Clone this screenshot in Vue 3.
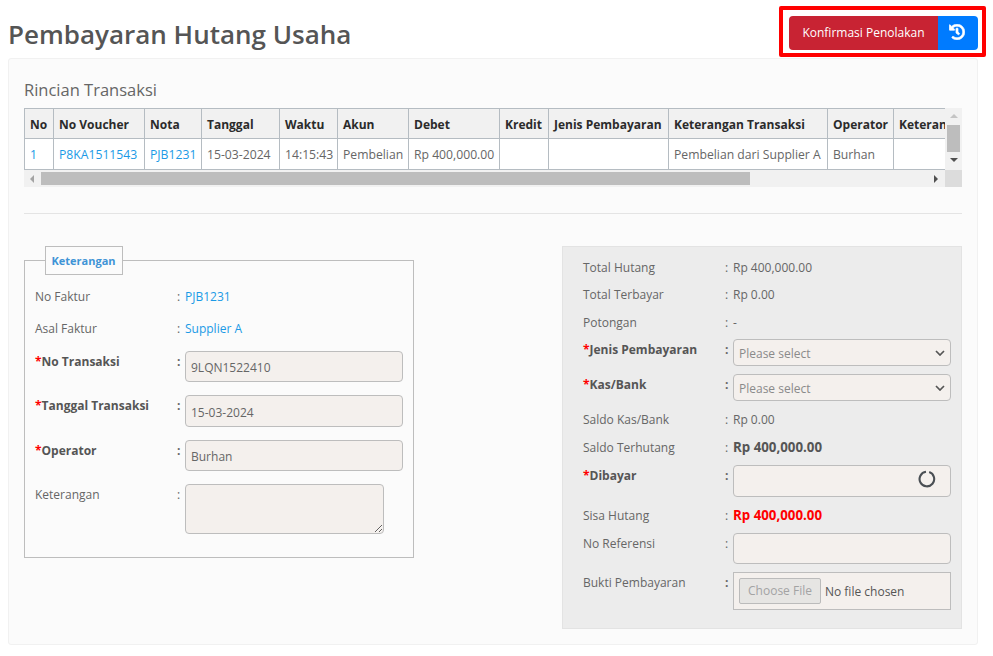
<script setup>
const columns = [
  { title: 'No', width: 29 },
  { title: 'No Voucher', width: 91 },
  { title: 'Nota', width: 57 },
  { title: 'Tanggal', width: 78 },
  { title: 'Waktu', width: 58 },
  { title: 'Akun', width: 71 },
  { title: 'Debet', width: 91 },
  { title: 'Kredit', width: 49 },
  { title: 'Jenis Pembayaran', width: 120 },
  { title: 'Keterangan Transaksi', width: 159 },
  { title: 'Operator', width: 66 },
  { title: 'Keterangan', width: 90 }
]
const tableWidth = columns.reduce((sum, c) => sum + c.width, 0)
</script>

<template>
  <div class="page">
    <header class="head">
      <h1 class="title">Pembayaran Hutang Usaha</h1>
      <div class="mark">
        <div class="btns">
          <button class="btn red">Konfirmasi Penolakan</button>
          <button class="btn blue" aria-label="Riwayat">
            <svg class="history" width="16" height="16" viewBox="0 0 512 512"><path fill="#fff" stroke="#fff" stroke-width="22" d="M504 255.5c.3 136.7-111.2 248.4-247.9 248.5-59 0-113.2-20.5-155.8-54.9-11.1-8.9-11.9-25.5-1.8-35.6l11.3-11.3c8.6-8.6 22.4-9.6 31.9-2C173.1 425.1 212.8 440 256 440c101.7 0 184-82.3 184-184 0-101.7-82.3-184-184-184-48.8 0-93.1 19-126.1 49.9l50.8 50.8c10.1 10.1 2.9 27.3-11.3 27.3H24c-8.8 0-16-7.2-16-16V38.6c0-14.3 17.2-21.4 27.3-11.3l49.4 49.4C129.2 34.1 189.6 8 256 8c136.8 0 247.7 110.8 248 247.5zm-180.9 78.8l9.8-12.6c8.1-10.5 6.3-25.5-4.2-33.7L288 256.3V152c0-13.3-10.7-24-24-24h-16c-13.3 0-24 10.7-24 24v135.7l65.4 50.9c10.5 8.1 25.5 6.3 33.7-4.3z"/></svg>
          </button>
        </div>
      </div>
    </header>

    <main class="card">
      <h2 class="sub">Rincian Transaksi</h2>

      <div class="scroller">
        <div class="viewport">
          <table class="grid" :style="{ width: tableWidth + 'px' }">
            <colgroup>
              <col v-for="c in columns" :key="c.title" :style="{ width: c.width + 'px' }" />
            </colgroup>
            <thead>
              <tr><th v-for="c in columns" :key="c.title">{{ c.title }}</th></tr>
            </thead>
            <tbody>
              <tr>
                <td><a class="link">1</a></td>
                <td><a class="link">P8KA1511543</a></td>
                <td><a class="link">PJB1231</a></td>
                <td>15-03-2024</td>
                <td>14:15:43</td>
                <td>Pembelian</td>
                <td>Rp 400,000.00</td>
                <td></td>
                <td></td>
                <td>Pembelian dari Supplier A</td>
                <td>Burhan</td>
                <td></td>
              </tr>
            </tbody>
          </table>
        </div>
        <div class="vbar">
          <span class="arrow up"></span>
          <span class="vthumb"></span>
          <span class="arrow down"></span>
        </div>
        <div class="hbar">
          <span class="arrow left"></span>
          <span class="hthumb"></span>
          <span class="arrow right"></span>
        </div>
        <div class="corner"></div>
      </div>

      <hr class="rule" />

      <div class="cols">
        <fieldset class="box">
          <legend class="legend">Keterangan</legend>
          <div class="row first"><span>No Faktur</span><span class="colon">:</span><a class="link">PJB1231</a></div>
          <div class="row"><span>Asal Faktur</span><span class="colon">:</span><a class="link">Supplier A</a></div>
          <div class="row ctl"><b class="req">No Transaksi</b><b class="colon">:</b><input class="field" value="9LQN1522410" /></div>
          <div class="row ctl tall"><b class="req">Tanggal Transaksi</b><b class="colon">:</b><input class="field" value="15-03-2024" /></div>
          <div class="row ctl"><b class="req">Operator</b><b class="colon">:</b><input class="field" value="Burhan" /></div>
          <div class="row ctl"><span>Keterangan</span><span class="colon">:</span><textarea class="field area"></textarea></div>
        </fieldset>

        <section class="panel">
          <div class="row"><span>Total Hutang</span><span class="colon">:</span><span>Rp 400,000.00</span></div>
          <div class="row"><span>Total Terbayar</span><span class="colon">:</span><span>Rp 0.00</span></div>
          <div class="row wide"><span>Potongan</span><span class="colon">:</span><span>-</span></div>
          <div class="row ctl narrower"><b class="req">Jenis Pembayaran</b><b class="colon">:</b>
            <select class="field sel"><option>Please select</option></select></div>
          <div class="row ctl narrow"><b class="req">Kas/Bank</b><b class="colon">:</b>
            <select class="field sel"><option>Please select</option></select></div>
          <div class="row wide"><span>Saldo Kas/Bank</span><span class="colon">:</span><span>Rp 0.00</span></div>
          <div class="row wide"><span>Saldo Terhutang</span><span class="colon">:</span><b class="amount">Rp 400,000.00</b></div>
          <div class="row ctl narrow"><b class="req">Dibayar</b><b class="colon">:</b>
            <div class="wrap">
              <input class="field tall-field" />
              <svg class="spin" width="18" height="18" viewBox="0 0 18 18"><path d="M11.2 2.1A7.3 7.3 0 1 1 8 1.77" fill="none" stroke="#4a4f54" stroke-width="2.1"/></svg>
            </div>
          </div>
          <div class="row wide"><span>Sisa Hutang</span><span class="colon">:</span><b class="amount alert">Rp 400,000.00</b></div>
          <div class="row ctl narrow"><span>No Referensi</span><span class="colon">:</span><input class="field" /></div>
          <div class="row ctl narrow"><span>Bukti Pembayaran</span><b class="colon">:</b>
            <div class="file"><span class="choose">Choose File</span><span class="none">No file chosen</span></div>
          </div>
        </section>
      </div>
    </main>
  </div>
</template>

<style>
body { margin: 0; background: #fff; }
</style>

<style scoped>
.page {
  width: 993px;
  height: 656px;
  box-sizing: border-box;
  overflow: hidden;
  padding: 6px 7px 0 8px;
  font-family: "Open Sans", "Noto Sans", sans-serif;
  font-size: 12px;
  line-height: 18px;
  color: #666;
}
.head {
  display: flex;
  justify-content: space-between;
  align-items: flex-start;
  height: 52px;
}
.title {
  margin: 11px 0 0;
  font-size: 26px;
  line-height: 34px;
  font-weight: 600;
  color: #555;
}
.mark {
  border: 4px solid #f00;
  border-radius: 2px;
  padding: 6px 4px 3px 6px;
}
.btns { display: flex; height: 34px; }
.btn {
  border: 0;
  height: 34px;
  padding: 0;
  color: #fff;
  font: inherit;
  display: flex;
  align-items: center;
  justify-content: center;
}
.red { width: 149px; background: #c82333; border-radius: 4px 0 0 4px; }
.blue { width: 40px; background: #007bff; border-radius: 0 4px 4px 0; }
.history { margin: 0 2px 3px 0; }

.card {
  width: 970px;
  height: 587px;
  box-sizing: border-box;
  background: #fbfbfb;
  border: 1px solid #f1f1f1;
  border-radius: 3px;
  padding: 19px 15px 0;
}
.sub {
  margin: 0 0 6px;
  font-size: 16.5px;
  line-height: 24px;
  font-weight: 400;
  color: #666;
}
.scroller {
  display: grid;
  grid-template-columns: 921px 17px;
  grid-template-rows: 62px 17px;
  width: 938px;
}
.viewport { overflow: hidden; background: #fff; }
.grid {
  table-layout: fixed;
  border-collapse: collapse;
}
.grid th, .grid td {
  border: 1px solid #b5bcc2;
  padding: 2px 5px 0;
  text-align: left;
  white-space: nowrap;
  overflow: hidden;
  box-sizing: border-box;
}
.grid th { height: 30px; background: #f1f1f1; color: #2b2b2b; font-weight: 700; }
.grid td { height: 31px; color: #666; font-size: 12.2px; }
.link { color: #1a9ae6; }
.vbar {
  background: #f1f1f1;
  display: flex;
  flex-direction: column;
  align-items: center;
}
.hbar {
  background: #f1f1f1;
  display: flex;
  align-items: center;
}
.corner { background: #dcdcdc; }
.vthumb { width: 13px; height: 27px; background: #bdbdbd; }
.hthumb { width: 709px; height: 13px; background: #bdbdbd; }
.arrow { width: 17px; height: 17px; flex: none; position: relative; }
.arrow::after {
  content: "";
  position: absolute;
  width: 0;
  height: 0;
  left: 5px;
  top: 6px;
  border: 4px solid transparent;
}
.up::after { border-top: 0; border-bottom: 4px solid #c4c4c4; }
.down { height: 18px; }
.down::after { border-bottom: 0; border-top: 4px solid #505050; }
.left::after { left: 6px; top: 5px; border-left: 0; border-right: 4px solid #a3a3a3; }
.right { margin-left: auto; }
.right::after { left: 6px; top: 5px; border-right: 0; border-left: 4px solid #505050; }

.rule {
  border: 0;
  border-top: 1px solid #e4e4e4;
  margin: 26px 0 32px;
  width: 938px;
}
.cols {
  display: flex;
  justify-content: space-between;
  width: 938px;
  align-items: flex-start;
}
.box {
  width: 390px;
  box-sizing: border-box;
  margin: 0;
  padding: 13px 10px 23px;
  border: 1px solid #bdbdbd;
  min-width: 0;
  display: flex;
  flex-direction: column;
  gap: 13px;
}
.first { margin-bottom: 1px; }
.legend {
  margin-left: 10px;
  padding: 0 6px 0 5.5px;
  height: 29px;
  box-sizing: border-box;
  border: 1px solid #bdbdbd;
  line-height: 27px;
  font-weight: 700;
  font-size: 11px;
  color: #3f94d6;
  background: #fbfbfb;
}
.panel {
  width: 400px;
  height: 383px;
  box-sizing: border-box;
  background: #ececec;
  border: 1px solid #e3e3e3;
  padding: 12px 10px 0 20px;
  display: flex;
  flex-direction: column;
  gap: 9px;
}
.row {
  display: grid;
  grid-template-columns: 142px 8px 218px;
  align-items: start;
}
.wide { margin-top: 1px; }
.ctl > b, .ctl > span { padding-top: 2px; }
.narrow { margin-top: -1px; }
.narrower { margin-top: -2px; }
.tall .field { height: 32px; }
.req { color: #555; }
.req::before { content: "*"; color: #f00; }
.amount { color: #555; font-size: 13.3px; margin-top: -1px; }
.alert { color: #f00; }
.field {
  width: 218px;
  height: 31px;
  box-sizing: border-box;
  border: 1px solid #bdbdbd;
  border-radius: 4px;
  background: #f4f0ed;
  padding: 2px 5px 0;
  font: inherit;
  color: #666;
  outline: none;
  margin: 0;
}
.area { width: 199px; height: 50px; display: block; }
.sel {
  height: 27px;
  padding: 2px 5px 0;
  color: #8a8a8a;
  appearance: none;
  background-image: url("data:image/svg+xml,%3Csvg xmlns='http://www.w3.org/2000/svg' width='10' height='6' viewBox='0 0 10 6'%3E%3Cpath d='M1 1l4 4 4-4' fill='none' stroke='%23555' stroke-width='1.7'/%3E%3C/svg%3E");
  background-repeat: no-repeat;
  background-position: right 5px center;
}
.wrap { position: relative; }
.tall-field { height: 32px; display: block; }
.spin { position: absolute; right: 15px; top: 5px; }
.file {
  height: 38px;
  box-sizing: border-box;
  border: 1px solid #bdbdbd;
  background: #f4f0ed;
  display: flex;
  align-items: center;
  gap: 4px;
  padding: 0 5px;
  color: #555;
}
.none { padding-top: 2px; }
.choose {
  height: 26px;
  width: 82px;
  box-sizing: border-box;
  border: 1px solid #bbb;
  border-radius: 2px;
  background: #e6e5e3;
  color: #a3a3a3;
  text-align: center;
  line-height: 24px;
}
</style>
